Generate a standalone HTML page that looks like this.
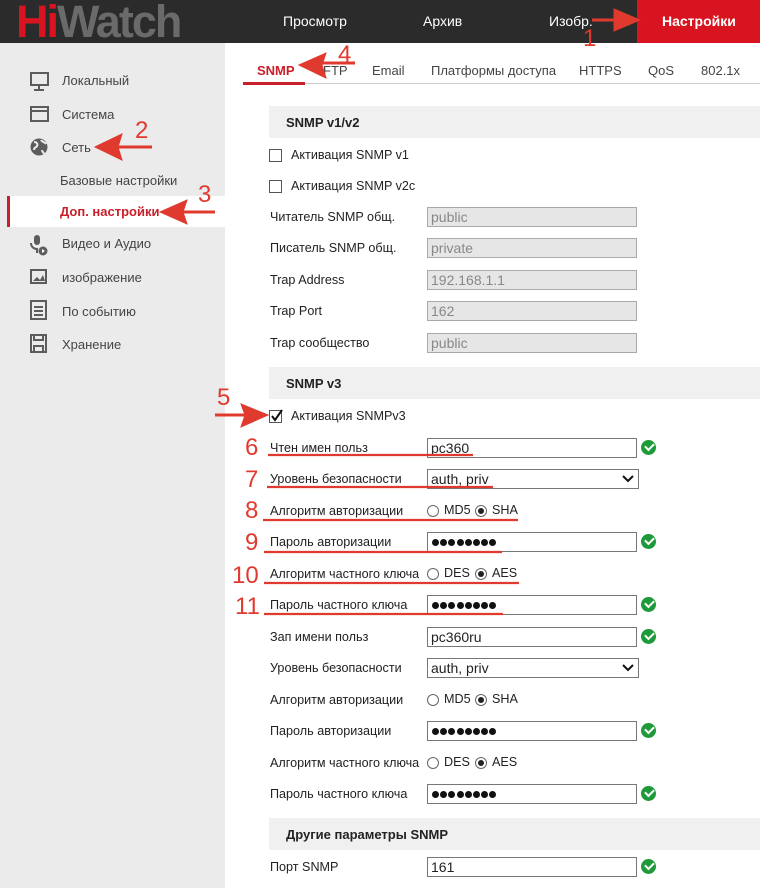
<!DOCTYPE html>
<html><head><meta charset="utf-8"><style>
*{margin:0;padding:0;box-sizing:border-box}
body{width:760px;height:888px;position:relative;overflow:hidden;background:#fff;font-family:"Liberation Sans",Arial,sans-serif;font-size:13px;color:#222}
.a{position:absolute;white-space:nowrap}
.top{left:0;top:0;width:760px;height:43px;background:#2b2b2b}
.nav{color:#fff;font-size:14px;top:13px}
.side{left:0;top:43px;width:225px;height:845px;background:#ebebeb}
.si{color:#444;font-size:13px;left:62px}
.lbl{left:270px;font-size:12.6px;color:#222;margin-top:1px}
.in{left:427px;width:210px;height:20px;border:1px solid #777;background:#fff;font-size:14px;padding-left:3px;line-height:18px;color:#222;font-family:"Liberation Sans",Arial,sans-serif}
.dis{background:#e6e6e6;border-color:#aaa;color:#888}
.hd{left:269px;width:491px;height:32px;background:#f0f0f0;font-weight:bold;font-size:13px;padding:9px 0 0 17px}
.cb{left:269px;width:13px;height:13px;border:1px solid #555;background:#fff}
.ok{left:641px;width:15px;height:15px;border-radius:50%;background:#1f9a3a}
.ok:after{content:"";position:absolute;left:4px;top:3px;width:7px;height:4px;border-left:2px solid #fff;border-bottom:2px solid #fff;transform:rotate(-45deg)}
.rd{width:12px;height:12px;border:1px solid #666;border-radius:50%;background:#fff}
.rd.on:after{content:"";position:absolute;left:2px;top:2px;width:6px;height:6px;border-radius:50%;background:#222}
.dots{padding-left:4px}
.dots i{display:inline-block;width:7px;height:7px;border-radius:50%;background:#111;margin-right:1.2px;vertical-align:middle;margin-top:-2px}
.tab{top:63px;font-size:13px;color:#444}
.num{color:#e03a2f;font-size:24px;font-family:"Liberation Sans",sans-serif}
.chev{position:absolute;right:4px;top:4px}
</style></head><body>
<div class="a top"></div>
<div class="a" style="left:16px;top:-2px;font-size:45px;line-height:48px;font-weight:bold;letter-spacing:-2px;"><span style="color:#d7141f">Hi</span><span style="color:#6a6a6a">Watch</span></div>
<div class="a nav" style="left:283px">Просмотр</div>
<div class="a nav" style="left:423px">Архив</div>
<div class="a nav" style="left:549px">Изобр.</div>
<div class="a" style="left:637px;top:0;width:123px;height:43px;background:#d7141f"></div>
<div class="a nav" style="left:662px;font-weight:bold">Настройки</div>

<div class="a side"></div>
<div class="a" style="left:7px;top:196px;width:218px;height:31px;background:#fff"></div>
<div class="a" style="left:7px;top:196px;width:3px;height:31px;background:#c8202a"></div>
<svg class="a" style="left:0;top:0" width="60" height="370">
<g fill="none" stroke="#5c5c5c" stroke-width="2">
<rect x="31" y="73" width="17" height="12"/><path d="M39 85v4M34 90h10"/>
<rect x="31" y="107" width="17" height="14"/><path d="M31 111h17"/>
<rect x="31" y="301" width="15" height="18"/><path d="M34 307h9M34 311h9M34 315h9"/>
<rect x="31" y="335" width="15" height="17"/><path d="M34 335v5h9v-5M34 352v-6h9v6"/>
</g>
<circle cx="39" cy="147" r="8.5" fill="#5c5c5c"/>
<path d="M34 142c3 0 4 2 3 4s-3 1-3 4M41 140c1 2 4 2 5 4M42 150c0 2 2 3 2 4" stroke="#ebebeb" stroke-width="2" fill="none"/>
<rect x="34" y="235" width="6" height="10" rx="3" fill="#5c5c5c"/><path d="M31 243c0 4 3 6 6 6v4" stroke="#5c5c5c" stroke-width="2" fill="none"/>
<circle cx="43" cy="251" r="4.5" fill="#5c5c5c"/><path d="M42 249l3 2-3 2z" fill="#fff"/>
<rect x="30" y="269" width="17" height="15" fill="#5c5c5c"/><rect x="32" y="271" width="13" height="11" fill="#ebebeb"/><path d="M33 281l4-4 3 3 3-5 2 6z" fill="#5c5c5c"/>
</svg>
<div class="a si" style="top:73px">Локальный</div>
<div class="a si" style="top:107px">Система</div>
<div class="a si" style="top:140px">Сеть</div>
<div class="a si" style="top:173px;left:60px">Базовые настройки</div>
<div class="a si" style="top:204px;left:60px;color:#c8202a;font-weight:bold">Доп. настройки</div>
<div class="a si" style="top:236px">Видео и Аудио</div>
<div class="a si" style="top:270px">изображение</div>
<div class="a si" style="top:304px">По событию</div>
<div class="a si" style="top:337px">Хранение</div>

<div class="a tab" style="left:257px;color:#c8202a;font-weight:bold">SNMP</div>
<div class="a tab" style="left:323px">FTP</div>
<div class="a tab" style="left:372px">Email</div>
<div class="a tab" style="left:431px">Платформы доступа</div>
<div class="a tab" style="left:579px">HTTPS</div>
<div class="a tab" style="left:648px">QoS</div>
<div class="a tab" style="left:701px">802.1x</div>
<div class="a" style="left:243px;top:83px;width:517px;height:1px;background:#ccc"></div>
<div class="a" style="left:243px;top:82px;width:62px;height:3px;background:#c8202a"></div>

<div class="a hd" style="top:106px">SNMP v1/v2</div>
<div class="a cb" style="top:149px"></div><div class="a lbl" style="left:291px;top:147px">Активация SNMP v1</div>
<div class="a cb" style="top:180px"></div><div class="a lbl" style="left:291px;top:178px">Активация SNMP v2c</div>
<div class="a lbl" style="top:209px">Читатель SNMP общ.</div><div class="a in dis" style="top:207px">public</div>
<div class="a lbl" style="top:240px">Писатель SNMP общ.</div><div class="a in dis" style="top:238px">private</div>
<div class="a lbl" style="top:272px">Trap Address</div><div class="a in dis" style="top:270px">192.168.1.1</div>
<div class="a lbl" style="top:303px">Trap Port</div><div class="a in dis" style="top:301px">162</div>
<div class="a lbl" style="top:335px">Trap сообщество</div><div class="a in dis" style="top:333px">public</div>

<div class="a hd" style="top:367px">SNMP v3</div>
<div class="a cb" style="top:410px"></div>
<svg class="a" style="left:269px;top:408px" width="16" height="16"><path d="M3 8l3 4 7-10" stroke="#111" stroke-width="2" fill="none"/></svg>
<div class="a lbl" style="left:291px;top:408px">Активация SNMPv3</div>

<div class="a lbl" style="top:440px">Чтен имен польз</div><div class="a in" style="top:438px">pc360</div><div class="a ok" style="top:440px"></div>
<div class="a lbl" style="top:471px">Уровень безопасности</div><div class="a in" style="top:469px;width:212px">auth, priv<svg class="chev" width="12" height="10"><path d="M1 2l5 5 5-5" stroke="#111" stroke-width="2" fill="none"/></svg></div>
<div class="a lbl" style="top:503px">Алгоритм авторизации</div>
<div class="a rd" style="left:427px;top:505px"></div><div class="a lbl" style="left:444px;top:502px">MD5</div><div class="a rd on" style="left:475px;top:505px"></div><div class="a lbl" style="left:492px;top:502px">SHA</div>
<div class="a lbl" style="top:534px">Пароль авторизации</div><div class="a in dots" style="top:532px"><i></i><i></i><i></i><i></i><i></i><i></i><i></i><i></i></div><div class="a ok" style="top:534px"></div>
<div class="a lbl" style="top:566px">Алгоритм частного ключа</div>
<div class="a rd" style="left:427px;top:568px"></div><div class="a lbl" style="left:444px;top:565px">DES</div><div class="a rd on" style="left:475px;top:568px"></div><div class="a lbl" style="left:492px;top:565px">AES</div>
<div class="a lbl" style="top:597px">Пароль частного ключа</div><div class="a in dots" style="top:595px"><i></i><i></i><i></i><i></i><i></i><i></i><i></i><i></i></div><div class="a ok" style="top:597px"></div>

<div class="a lbl" style="top:629px">Зап имени польз</div><div class="a in" style="top:627px">pc360ru</div><div class="a ok" style="top:629px"></div>
<div class="a lbl" style="top:660px">Уровень безопасности</div><div class="a in" style="top:658px;width:212px">auth, priv<svg class="chev" width="12" height="10"><path d="M1 2l5 5 5-5" stroke="#111" stroke-width="2" fill="none"/></svg></div>
<div class="a lbl" style="top:692px">Алгоритм авторизации</div>
<div class="a rd" style="left:427px;top:694px"></div><div class="a lbl" style="left:444px;top:691px">MD5</div><div class="a rd on" style="left:475px;top:694px"></div><div class="a lbl" style="left:492px;top:691px">SHA</div>
<div class="a lbl" style="top:723px">Пароль авторизации</div><div class="a in dots" style="top:721px"><i></i><i></i><i></i><i></i><i></i><i></i><i></i><i></i></div><div class="a ok" style="top:723px"></div>
<div class="a lbl" style="top:755px">Алгоритм частного ключа</div>
<div class="a rd" style="left:427px;top:757px"></div><div class="a lbl" style="left:444px;top:754px">DES</div><div class="a rd on" style="left:475px;top:757px"></div><div class="a lbl" style="left:492px;top:754px">AES</div>
<div class="a lbl" style="top:786px">Пароль частного ключа</div><div class="a in dots" style="top:784px"><i></i><i></i><i></i><i></i><i></i><i></i><i></i><i></i></div><div class="a ok" style="top:786px"></div>

<div class="a hd" style="top:818px">Другие параметры SNMP</div>
<div class="a lbl" style="top:859px">Порт SNMP</div><div class="a in" style="top:857px">161</div><div class="a ok" style="top:859px"></div>

<svg class="a" style="left:0;top:0" width="760" height="888">
<g fill="#e03a2f" stroke="#e03a2f">
<path d="M592 20H622" stroke-width="3"/><path d="M614 9L640 20L614 31Z"/>
<path d="M152 147H115" stroke-width="3"/><path d="M95 147L122 134L118 147L122 160Z"/>
<path d="M215 212H180" stroke-width="3"/><path d="M160 212L187 200L183 212L187 224Z"/>
<path d="M355 63H315" stroke-width="3"/><path d="M299 65L326 53L322 65L326 78Z"/>
<path d="M215 415H250" stroke-width="3"/><path d="M268 415L241 404L245 415L241 427Z"/>
<g stroke-width="2.2">
<path d="M268 455H473"/><path d="M267 487H493"/><path d="M263 520H518"/><path d="M264 552H502"/><path d="M264 583H519"/><path d="M264 614H503"/>
</g></g>
</svg>
<div class="a num" style="left:583px;top:25px">1</div>
<div class="a num" style="left:135px;top:117px">2</div>
<div class="a num" style="left:198px;top:181px">3</div>
<div class="a num" style="left:338px;top:41px">4</div>
<div class="a num" style="left:217px;top:384px">5</div>
<div class="a num" style="left:245px;top:434px">6</div>
<div class="a num" style="left:245px;top:466px">7</div>
<div class="a num" style="left:245px;top:497px">8</div>
<div class="a num" style="left:245px;top:529px">9</div>
<div class="a num" style="left:232px;top:562px">10</div>
<div class="a num" style="left:235px;top:593px">11</div>
</body></html>
